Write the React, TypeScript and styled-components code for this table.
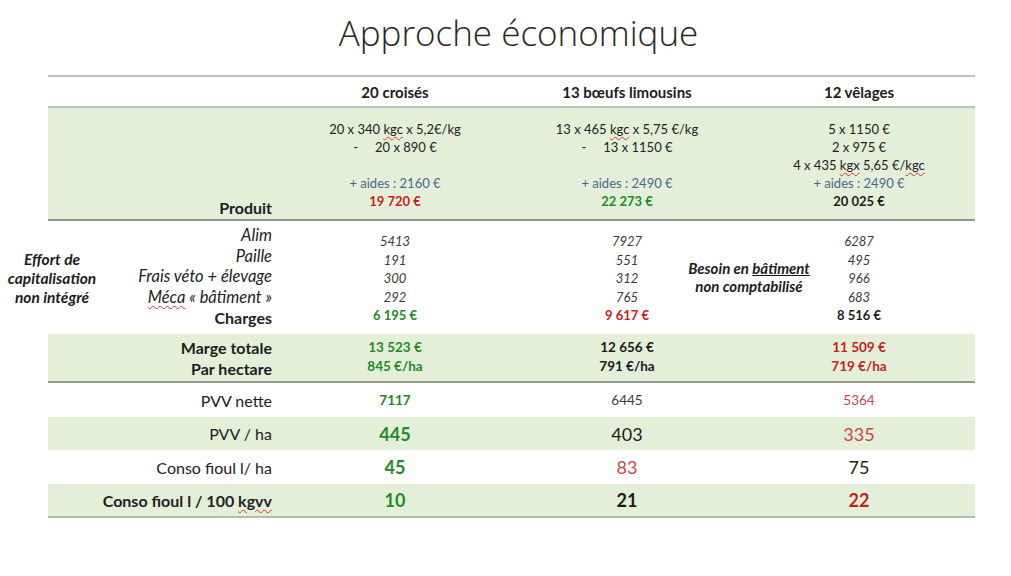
import React from 'react'
import styled, { createGlobalStyle } from 'styled-components'

const COLS = '231px 232px 232px 232px'

type Tone = 'green' | 'red' | 'soft' | 'dark' | 'blue' | 'gray'

const toneColor: Record<Tone, string> = {
    green: '#238a27',
    red: '#c41f26',
    soft: '#c9454d',
    dark: '#1c1c1c',
    blue: '#4b6888',
    gray: '#3d3d3d',
}

const GlobalStyle = createGlobalStyle`
    body {
        margin: 0;
        background: #fff;
        font-family: Lato, "Open Sans", sans-serif;
        color: #1c1c1c;
    }
`

function App() {
    return (
        <Page>
            <GlobalStyle />
            <Title>Approche économique</Title>

            <Table>
                <HeaderRow>
                    <div />
                    <HeadCell>20 croisés</HeadCell>
                    <HeadCell>13 bœufs limousins</HeadCell>
                    <HeadCell>12 vêlages</HeadCell>
                </HeaderRow>

                <ProductBand>
                    <LabelCell>
                        <StrongLabel>Produit</StrongLabel>
                    </LabelCell>
                    <Stack>
                        <div>20 x 340 <Spell>kgc</Spell> x 5,2€/kg</div>
                        <div><Dash>-</Dash>20 x 890 €</div>
                        <div>&nbsp;</div>
                        <Value $tone="blue">+ aides : 2160 €</Value>
                        <Value $tone="red" $bold>19 720 €</Value>
                    </Stack>
                    <Stack>
                        <div>13 x 465 <Spell>kgc</Spell> x 5,75 €/kg</div>
                        <div><Dash>-</Dash>13 x 1150 €</div>
                        <div>&nbsp;</div>
                        <Value $tone="blue">+ aides : 2490 €</Value>
                        <Value $tone="green" $bold>22 273 €</Value>
                    </Stack>
                    <Stack>
                        <div>5 x 1150 €</div>
                        <div>2 x 975 €</div>
                        <div>4 x 435 <Spell>kgx</Spell> 5,65 €/<Spell>kgc</Spell></div>
                        <Value $tone="blue">+ aides : 2490 €</Value>
                        <Value $tone="dark" $bold>20 025 €</Value>
                    </Stack>
                </ProductBand>

                <ChargesSection>
                    <ChargesLabel $col="1">
                        <SideNote>Effort de<br />capitalisation<br />non intégré</SideNote>
                        <LabelList>
                            <div>Alim</div>
                            <div>Paille</div>
                            <div>Frais véto + élevage</div>
                            <div><Spell>Méca</Spell> « bâtiment »</div>
                            <TotalLabel>Charges</TotalLabel>
                        </LabelList>
                    </ChargesLabel>
                    <NumberList $col="2">
                        <div>5413</div>
                        <div>191</div>
                        <div>300</div>
                        <div>292</div>
                        <Value $tone="green" $bold $upright>6 195 €</Value>
                    </NumberList>
                    <NumberList $col="3">
                        <div>7927</div>
                        <div>551</div>
                        <div>312</div>
                        <div>765</div>
                        <Value $tone="red" $bold $upright>9 617 €</Value>
                    </NumberList>
                    <BuildingNote>
                        Besoin en <u>bâtiment</u>
                        <br />
                        non comptabilisé
                    </BuildingNote>
                    <NumberList $col="4">
                        <div>6287</div>
                        <div>495</div>
                        <div>966</div>
                        <div>683</div>
                        <Value $tone="dark" $bold $upright>8 516 €</Value>
                    </NumberList>
                </ChargesSection>

                <MarginBand>
                    <MarginLabels>
                        <div>Marge totale</div>
                        <div>Par hectare</div>
                    </MarginLabels>
                    <MarginValues $tone="green">
                        <div>13 523 €</div>
                        <div>845 €/ha</div>
                    </MarginValues>
                    <MarginValues $tone="dark">
                        <div>12 656 €</div>
                        <div>791 €/ha</div>
                    </MarginValues>
                    <MarginValues $tone="red">
                        <div>11 509 €</div>
                        <div>719 €/ha</div>
                    </MarginValues>
                </MarginBand>

                <Row $height={34}>
                    <RowLabel>PVV nette</RowLabel>
                    <RowValue $tone="green" $bold>7117</RowValue>
                    <RowValue $tone="gray">6445</RowValue>
                    <RowValue $tone="soft">5364</RowValue>
                </Row>
                <Row $height={33} $shaded>
                    <RowLabel>PVV / ha</RowLabel>
                    <RowValue $tone="green" $bold $big>445</RowValue>
                    <RowValue $tone="dark" $big>403</RowValue>
                    <RowValue $tone="soft" $big>335</RowValue>
                </Row>
                <Row $height={34}>
                    <RowLabel>Conso fioul l/ ha</RowLabel>
                    <RowValue $tone="green" $bold $big>45</RowValue>
                    <RowValue $tone="soft" $big>83</RowValue>
                    <RowValue $tone="dark" $big>75</RowValue>
                </Row>
                <Row $height={34} $shaded $last>
                    <RowLabel $bold>Conso fioul l / 100 <Spell>kgvv</Spell></RowLabel>
                    <RowValue $tone="green" $bold $big>10</RowValue>
                    <RowValue $tone="dark" $bold $big>21</RowValue>
                    <RowValue $tone="red" $bold $big>22</RowValue>
                </Row>
            </Table>
        </Page>
    )
}

export default App

const Page = styled.div`
    width: 1011px;
    height: 576px;
    padding-top: 13px;
    box-sizing: border-box;
    overflow: hidden;
`

const Title = styled.h1`
    margin: 0 0 22px;
    padding-left: 26px;
    text-align: center;
    font-family: "Open Sans", sans-serif;
    font-weight: 300;
    font-size: 35px;
    line-height: 40px;
    color: #262626;
`

const Table = styled.div`
    width: 927px;
    margin-left: 48px;
`

const HeaderRow = styled.div`
    display: grid;
    grid-template-columns: ${COLS};
    align-items: center;
    height: 33px;
    box-sizing: border-box;
    border-top: 2px solid #bac7b3;
    border-bottom: 2px solid #bac7b3;
`

const HeadCell = styled.div`
    text-align: center;
    font-weight: 700;
    font-size: 15px;
`

const ProductBand = styled.div`
    display: grid;
    grid-template-columns: ${COLS};
    background: #e3efd9;
    padding: 12px 0 9px;
    border-bottom: 2px solid #8e9a89;
`

const LabelCell = styled.div`
    display: flex;
    align-items: flex-end;
    justify-content: flex-end;
    padding-right: 7px;
`

const StrongLabel = styled.div`
    font-weight: 700;
    font-size: 16px;
    line-height: 20px;
    margin-bottom: -8px;
`

const Stack = styled.div`
    text-align: center;
    font-size: 13px;
    line-height: 18px;
    color: #222;
    white-space: nowrap;
`

const Value = styled.div<{ $tone: Tone; $bold?: boolean; $upright?: boolean }>`
    color: ${p => toneColor[p.$tone]};
    font-weight: ${p => (p.$bold ? 700 : 400)};
    ${p => (p.$upright ? 'font-style: normal;' : '')}
`

const Dash = styled.span`
    margin-right: 17px;
`

const Spell = styled.span`
    text-decoration: underline wavy #d8343a;
    text-decoration-thickness: 1px;
    text-underline-offset: 2px;
`

const ChargesSection = styled.div`
    display: grid;
    grid-template-columns: ${COLS};
    grid-template-rows: 113px;
`

const ChargesLabel = styled.div<{ $col: string }>`
    grid-column: ${p => p.$col};
    grid-row: 1;
    display: flex;
    justify-content: space-between;
    align-items: center;
    padding-right: 7px;
`

const SideNote = styled.div`
    width: 96px;
    margin-left: -44px;
    margin-top: 2px;
    text-align: center;
    font-weight: 700;
    font-style: italic;
    font-size: 15.5px;
    line-height: 19px;
    color: #1c1c1c;
`

const LabelList = styled.div`
    align-self: flex-start;
    padding-top: 4px;
    text-align: right;
    font-style: italic;
    font-size: 16.5px;
    line-height: 20.5px;
    color: #222;
`

const TotalLabel = styled.div`
    font-style: normal;
    font-weight: 700;
    font-size: 16px;
    line-height: 22px;
`

const NumberList = styled.div<{ $col: string }>`
    grid-column: ${p => p.$col};
    grid-row: 1;
    padding-top: 11px;
    text-align: center;
    font-style: italic;
    font-size: 13px;
    line-height: 18.5px;
    color: #3a3a3a;
`

const BuildingNote = styled.div`
    grid-column: 3 / 5;
    grid-row: 1;
    align-self: center;
    padding-left: 12px;
    margin-top: -2px;
    text-align: center;
    font-weight: 700;
    font-style: italic;
    font-size: 15px;
    line-height: 18px;
`

const MarginBand = styled.div`
    display: grid;
    grid-template-columns: ${COLS};
    background: #e3efd9;
    height: 49px;
    box-sizing: border-box;
    padding-top: 3px;
    border-bottom: 2px solid #8e9a89;
`

const MarginLabels = styled.div`
    text-align: right;
    padding-right: 7px;
    font-weight: 700;
    font-size: 16px;
    line-height: 21px;
`

const MarginValues = styled.div<{ $tone: Tone }>`
    text-align: center;
    padding-top: 1px;
    font-weight: 700;
    font-size: 13.5px;
    line-height: 19px;
    color: ${p => toneColor[p.$tone]};
`

const Row = styled.div<{ $height: number; $shaded?: boolean; $last?: boolean }>`
    display: grid;
    grid-template-columns: ${COLS};
    align-items: center;
    height: ${p => p.$height}px;
    box-sizing: border-box;
    background: ${p => (p.$shaded ? '#e3efd9' : '#fff')};
    border-bottom: ${p => (p.$last ? '2px solid #b0c0a7' : 'none')};
`

const RowLabel = styled.div<{ $bold?: boolean }>`
    text-align: right;
    padding-right: 7px;
    font-size: 16px;
    font-weight: ${p => (p.$bold ? 700 : 400)};
    color: #222;
`

const RowValue = styled.div<{ $tone: Tone; $bold?: boolean; $big?: boolean }>`
    text-align: center;
    color: ${p => toneColor[p.$tone]};
    font-weight: ${p => (p.$bold ? 700 : 400)};
    font-size: ${p => (p.$big ? '18px' : '13.5px')};
`
